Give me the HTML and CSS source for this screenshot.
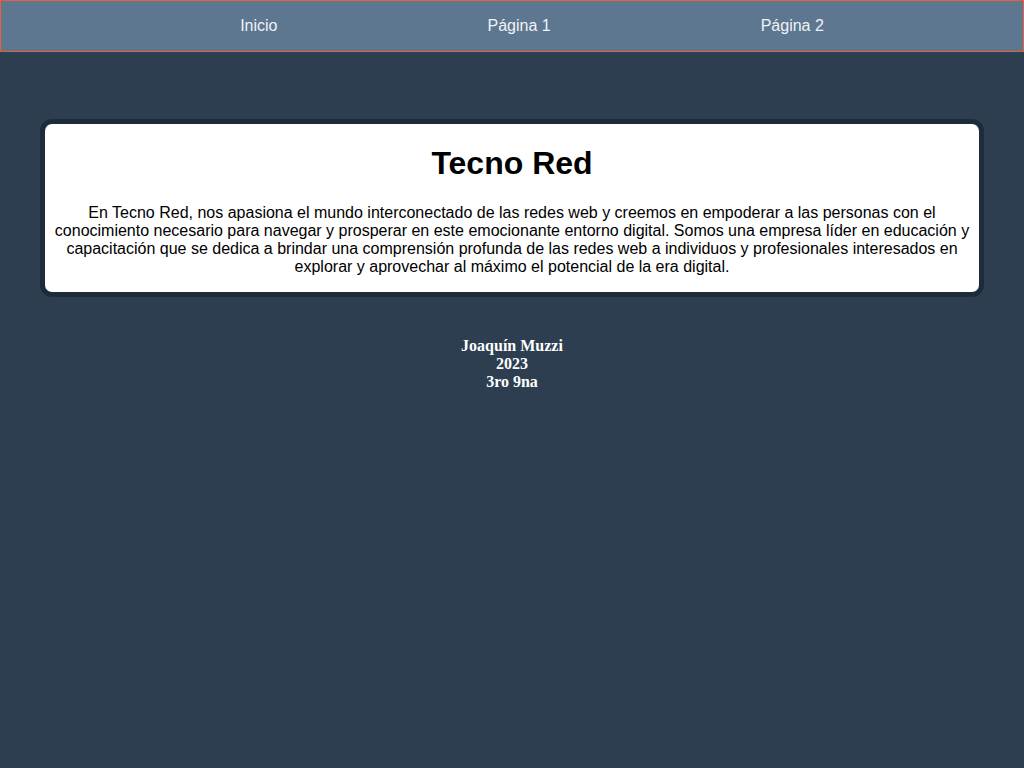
FILE: index.html
```html
<!DOCTYPE html>
<html lang="es">
<head>
<meta charset="utf-8">
<title>Tecno Red</title>
<link rel="stylesheet" href="styles.css">
</head>
<body>
<nav class="nav">
  <ul class="nav-list">
    <li><a href="#">Inicio</a></li>
    <li><a href="#">Página 1</a></li>
    <li><a href="#">Página 2</a></li>
  </ul>
</nav>
<main class="card">
  <h1 class="card-title">Tecno Red</h1>
  <p class="card-text">En Tecno Red, nos apasiona el mundo interconectado de las redes web y creemos en empoderar a las personas con el conocimiento necesario para navegar y prosperar en este emocionante entorno digital. Somos una empresa líder en educación y capacitación que se dedica a brindar una comprensión profunda de las redes web a individuos y profesionales interesados en explorar y aprovechar al máximo el potencial de la era digital.</p>
</main>
<footer class="footer">
  <div>Joaquín Muzzi</div>
  <div>2023</div>
  <div>3ro 9na</div>
</footer>
</body>
</html>
```

FILE: styles.css
```css
html, body {
  margin: 0;
  padding: 0;
}
body {
  background: #2c3e50;
  font-family: "Liberation Sans", Arial, sans-serif;
  min-height: 768px;
}
.nav {
  background: #5e7791;
  border: 1px solid #e8603a;
  height: 50px;
  display: flex;
  align-items: center;
}
.nav-list {
  list-style: none;
  margin: 0;
  padding: 0 0 0 40px;
  width: 100%;
  box-sizing: border-box;
  display: flex;
  justify-content: center;
  gap: 210px;
}
.nav-list a {
  color: #f0f2f5;
  text-decoration: none;
  font-size: 16px;
}
.card {
  display: block;
  margin: 67px 40px 0;
  background: #ffffff;
  border: 5px solid #1e2b3a;
  border-radius: 12px;
  padding: 0 5px;
  text-align: center;
}
.card-title {
  font-size: 32px;
  margin: 21px 0 0;
  line-height: 37px;
}
.card-text {
  font-size: 16px;
  line-height: 18px;
  margin: 22px 0 16px;
  color: #000;
}
.footer {
  margin-top: 40px;
  text-align: center;
  color: #ffffff;
  font-family: "Liberation Serif", "Times New Roman", serif;
  font-weight: bold;
  font-size: 16px;
  line-height: 18px;
}
```
